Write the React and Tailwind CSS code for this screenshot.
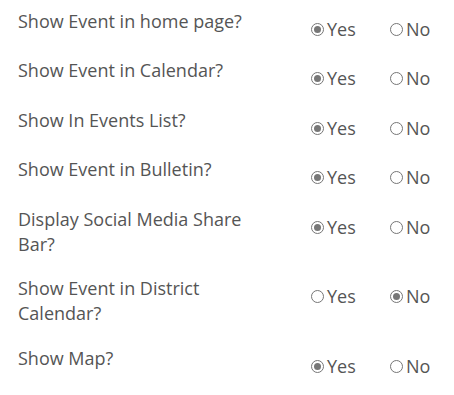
import React from "react";

const rows = [
  { label: "Show Event in home page?", yes: true },
  { label: "Show Event in Calendar?", yes: true },
  { label: "Show In Events List?", yes: true },
  { label: "Show Event in Bulletin?", yes: true },
  { label: "Display Social Media Share Bar?", yes: true },
  { label: "Show Event in District Calendar?", yes: false },
  { label: "Show Map?", yes: true },
];

function Radio({ checked }) {
  return (
    <span className="flex h-[13px] w-[13px] shrink-0 items-center justify-center rounded-full border border-[#767676] bg-white">
      {checked ? <span className="h-[7px] w-[7px] rounded-full bg-[#777777]" /> : null}
    </span>
  );
}

function Option({ checked, text, className }) {
  return (
    <span className={"flex items-center gap-[3px] " + (className || "")}>
      <Radio checked={checked} />
      <span>{text}</span>
    </span>
  );
}

export default function App() {
  return (
    <div className="min-h-[395px] w-[454px] bg-white pl-[18px] pt-[8.5px] font-['Open_Sans',sans-serif] text-[18px] leading-[25px] text-[#555555]">
      {rows.map((r) => (
        <div key={r.label} className="flex items-start">
          <div className="w-[293px] shrink-0 pb-[19.5px] pr-[35px]">{r.label}</div>
          <div className="flex h-[49.5px] items-start pt-[8px]">
            <Option checked={r.yes} text="Yes" className="w-[79px]" />
            <Option checked={!r.yes} text="No" />
          </div>
        </div>
      ))}
    </div>
  );
}
